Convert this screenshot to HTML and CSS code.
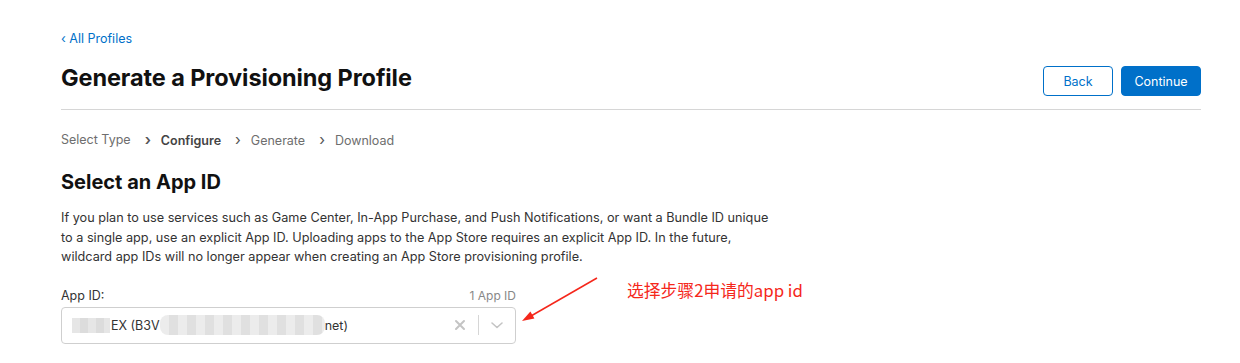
FILE: index.html
```html
<!DOCTYPE html>
<html lang="en">
<head>
    <meta charset="UTF-8">
    <title>Generate a Provisioning Profile</title>
    <link rel="stylesheet" href="styles.css">
</head>
<body>
    <div class="container">
        <a class="back-link" href="#">&lsaquo; All Profiles</a>

        <div class="page-header">
            <h1>Generate a Provisioning Profile</h1>
            <div class="actions">
                <button class="btn btn-outline">Back</button>
                <button class="btn btn-primary">Continue</button>
            </div>
        </div>

        <ol class="steps">
            <li>Select Type</li>
            <li class="active">Configure</li>
            <li>Generate</li>
            <li>Download</li>
        </ol>

        <h2>Select an App ID</h2>
        <p class="intro">If you plan to use services such as Game Center, In-App Purchase, and Push Notifications, or want a Bundle ID unique to a single app, use an explicit App ID. Uploading apps to the App Store requires an explicit App ID. In the future, wildcard app IDs will no longer appear when creating an App Store provisioning profile.</p>

        <div class="field">
            <div class="field-label">
                <label>App ID:</label>
                <span class="count">1 App ID</span>
            </div>
            <div class="select">
                <div class="value">
                    <span class="blur blur-a"></span>EX (B3V<span class="blur blur-b"></span>net)
                </div>
                <div class="indicators">
                    <svg class="clear" width="12" height="12" viewBox="0 0 12 12"><path d="M2 2L10 10M10 2L2 10" stroke="#c4c4c4" stroke-width="2" stroke-linecap="round"/></svg>
                    <span class="sep"></span>
                    <svg class="chevron" width="14" height="10" viewBox="0 0 14 10"><path d="M2 3l5 4.5L12 3" fill="none" stroke="#c4c4c4" stroke-width="1.6" stroke-linecap="round" stroke-linejoin="round"/></svg>
                </div>
            </div>

            <!-- annotation -->
            <svg class="note-arrow" width="90" height="60" viewBox="0 0 90 60"><path d="M78 5L12 43" stroke="#f5271b" stroke-width="1.5"/><path d="M3 48L11.4 38.5L15.4 45.5Z" fill="#f5271b"/></svg>
            <span class="note">选择步骤2申请的app id</span>
        </div>
    </div>
</body>
</html>
```

FILE: styles.css
```css
body {
    margin: 0;
    background: #fff;
    font-family: Inter, "Liberation Sans", sans-serif;
    color: #333;
}
.container {
    width: 1140px;
    margin-left: 61px;
    padding-top: 31px;
}
.back-link {
    display: block;
    font-size: 12.5px;
    color: #0070c9;
    text-decoration: none;
    line-height: 16px;
}
.page-header {
    display: flex;
    justify-content: space-between;
    align-items: flex-end;
    border-bottom: 1px solid #d6d6d6;
    padding-bottom: 13px;
    margin-top: 16px;
}
h1 {
    margin: 0 0 3px;
    font-size: 23.5px;
    font-weight: 700;
    color: #111;
    line-height: 30px;
    letter-spacing: -0.1px;
}
.actions {
    display: flex;
    gap: 8px;
}
.btn {
    font-family: inherit;
    font-size: 12.5px;
    height: 30px;
    border-radius: 4px;
    cursor: pointer;
    padding: 0;
}
.btn-outline {
    width: 70px;
    background: #fff;
    color: #0070c9;
    border: 1px solid #0070c9;
}
.btn-primary {
    width: 80px;
    background: #0070c9;
    color: #fff;
    border: 1px solid #0070c9;
}
.steps {
    list-style: none;
    display: flex;
    margin: 21px 0 0;
    padding: 0;
    font-size: 12.5px;
    color: #6e6e6e;
    line-height: 18px;
}
.steps li + li::before {
    content: "\203A";
    display: inline-block;
    margin: 0 10px 0 14px;
    color: #555;
    font-size: 15px;
}
.steps .active {
    font-weight: 600;
    color: #444;
}
h2 {
    margin: 19px 0 0;
    font-size: 20px;
    font-weight: 700;
    color: #111;
    line-height: 26px;
}
.intro {
    width: 712px;
    margin: 13px 0 0;
    font-size: 12.7px;
    line-height: 19.5px;
    color: #333;
}
.field {
    position: relative;
    width: 455px;
    margin-top: 21px;
}
.field-label {
    display: flex;
    justify-content: space-between;
    align-items: flex-end;
    font-size: 12.5px;
    line-height: 16px;
}
.field-label .count {
    color: #888;
    font-size: 12px;
}
.select {
    display: flex;
    align-items: center;
    justify-content: space-between;
    height: 37px;
    margin-top: 3px;
    border: 1px solid #cfcfcf;
    border-radius: 4px;
    box-sizing: border-box;
    padding-left: 10px;
}
.value {
    display: flex;
    align-items: center;
    font-size: 12.5px;
    color: #333;
}
.blur {
    display: inline-block;
    height: 15px;
    background: repeating-linear-gradient(90deg, #e6e6e6 0 8px, #dcdcdc 8px 16px);
}
.blur-a {
    width: 38px;
    margin-right: 1px;
}
.blur-b {
    width: 165px;
    height: 20px;
    border-radius: 8px;
    background: repeating-linear-gradient(90deg, #ececec 0 9px, #e0e0e0 9px 18px);
}
.indicators {
    display: flex;
    align-items: center;
    height: 100%;
}
.clear {
    margin-right: 12px;
}
.sep {
    width: 1px;
    height: 20px;
    background: #d6d6d6;
}
.chevron {
    margin: 0 11px 0 11px;
}
.note-arrow {
    position: absolute;
    left: 458px;
    top: -15px;
}
.note {
    position: absolute;
    left: 566px;
    top: -10px;
    white-space: nowrap;
    font-family: "Noto Sans CJK SC", "Liberation Sans", sans-serif;
    font-size: 16.8px;
    color: #f5271b;
}
```
